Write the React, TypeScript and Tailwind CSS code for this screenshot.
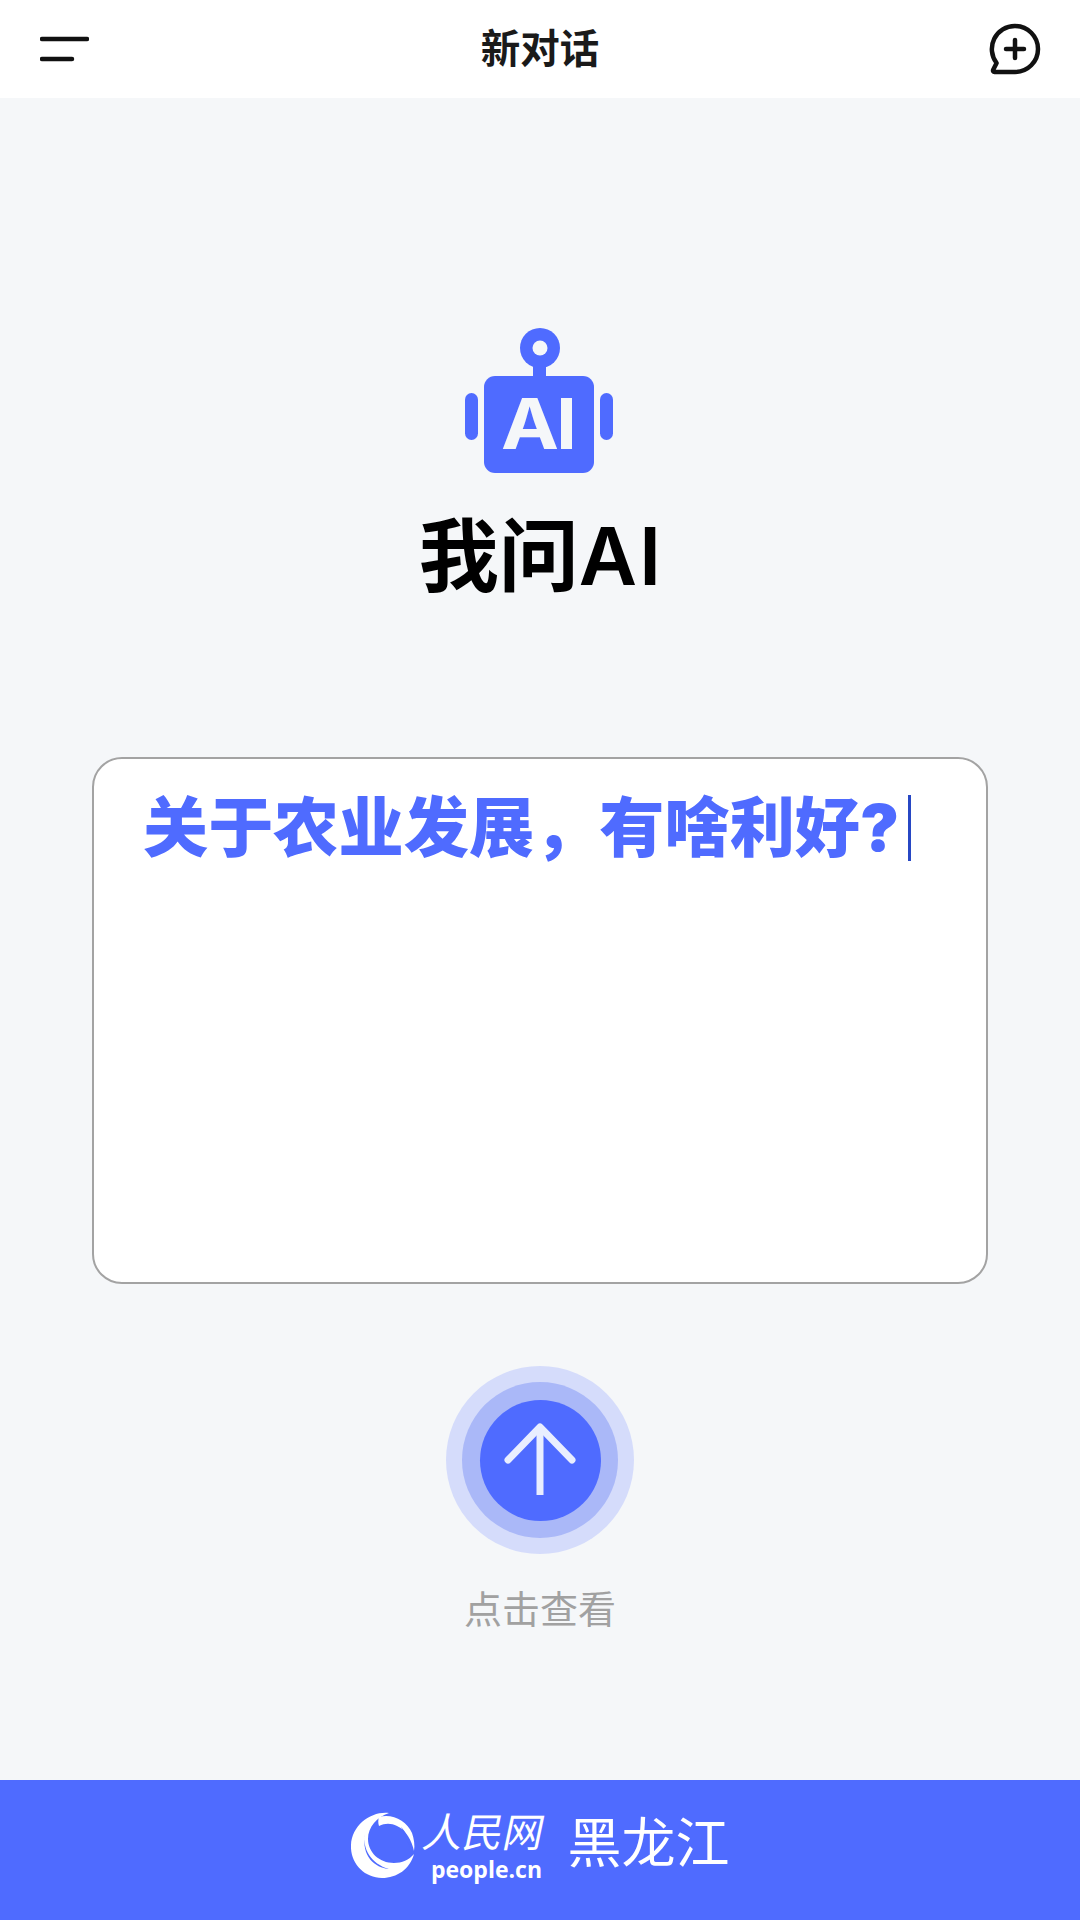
import React from 'react';

const cjk = "font-['Inter','Noto_Sans_CJK_SC',sans-serif]";

function MenuIcon() {
  return (
    <svg width="49" height="26" viewBox="0 0 49 26" fill="none">
      <path d="M2 3h45M2 23h30" stroke="#111" strokeWidth="4.5" strokeLinecap="round" />
    </svg>
  );
}

function NewChatIcon() {
  return (
    <svg width="52" height="52" viewBox="0 0 52 52" fill="none" stroke="#111" strokeWidth="4.5" strokeLinecap="round" strokeLinejoin="round">
      <path d="M26 3a23 23 0 0 1 0 46H5.5a1.5 1.5 0 0 1-1.3-2.2L7.6 40A23 23 0 0 1 26 3Z" />
      <path d="M26 17v18M17 26h18" />
    </svg>
  );
}

function RobotIcon() {
  return (
    <svg width="148" height="148" viewBox="0 0 148 148">
      <circle cx="75" cy="21" r="20" fill="#4f6bff" />
      <circle cx="75" cy="21" r="7.5" fill="#f5f7f9" />
      <rect x="68" y="36" width="13" height="16" fill="#4f6bff" />
      <rect x="19" y="49" width="110" height="97" rx="11" fill="#4f6bff" />
      <rect x="0" y="66" width="13" height="47" rx="6.5" fill="#4f6bff" />
      <rect x="135" y="66" width="13" height="47" rx="6.5" fill="#4f6bff" />
      <text x="36" y="122" textLength="58" lengthAdjust="spacingAndGlyphs" fontFamily="Inter, sans-serif" fontWeight="700" fontSize="70" fill="#f5f7f9">A</text>
      <rect x="96" y="71" width="11" height="51" fill="#f5f7f9" />
    </svg>
  );
}

function ArrowIcon() {
  return (
    <svg width="76" height="76" viewBox="0 0 76 76" fill="none" stroke="#e9eeff" strokeWidth="7" strokeLinejoin="round">
      <path d="M6 38 38 5l32 33" strokeLinecap="round" />
      <path d="M38 6v67" />
    </svg>
  );
}

function PeopleLogo() {
  return (
    <svg width="64" height="66" viewBox="0 0 64 66" fill="#fff">
      <path d="M38 1C20-1 1 13 0 33c-1 18 13 33 31 33 15 0 28-9 32-24-5 6-12 9-20 9C28 51 17 40 17 27 17 15 26 5 38 1Z" />
      <path d="M28 5c13-4 28 4 33 16 2 6 3 12 2 18-2-10-8-21-17-25-6-3-12-3-18 0-1-3-1-6 0-9Z" />
      <path d="M14 22c-3 14 6 30 24 35-14-1-28-13-24-35Z" fill="#4f6bff" />
      <path d="M50 15c5 5 8 12 9 20-3-7-6-13-9-20Z" fill="#4f6bff" />
    </svg>
  );
}

export default function App() {
  return (
    <div className={`flex h-[1920px] w-[1080px] flex-col bg-[#f5f7f9] ${cjk}`}>
      <header className="flex h-[98px] items-center justify-between bg-white pl-[40px] pr-[39px]">
        <MenuIcon />
        <h1 className="ml-[2px] mt-[1px] text-[39.5px] font-bold leading-none text-[#1a1a1a]">新对话</h1>
        <NewChatIcon />
      </header>

      <main className="flex flex-1 flex-col items-center">
        <div className="mt-[229px] mr-[3px]">
          <RobotIcon />
        </div>
        <h2 className="ml-[2px] mt-[31px] text-[80px] font-bold leading-[100px] text-black">
          我问<span className="font-semibold tracking-[2px]">AI</span>
        </h2>

        <div className="mt-[151px] h-[527px] w-[896px] rounded-[30px] border-2 border-[#a3a3a3] bg-white pl-[49px] pt-[27px]">
          <div className="flex items-center">
            <span className="text-[65.2px] font-black leading-[84px] text-[#4f6bff]">关于农业发展，有啥利好?</span>
            <span className="ml-[9px] h-[66px] w-[3px] bg-[#2747c4]" />
          </div>
        </div>

        <div className="mt-[82px] flex h-[188px] w-[188px] items-center justify-center rounded-full bg-[#d5dcfb]">
          <div className="flex h-[156px] w-[156px] items-center justify-center rounded-full bg-[#aab8f8]">
            <button className="flex h-[121px] w-[121px] items-center justify-center rounded-full bg-[#4f6bff]">
              <ArrowIcon />
            </button>
          </div>
        </div>
        <p className="mt-[30px] text-[38px] font-normal leading-[50px] text-[#a1a1a1]">点击查看</p>
      </main>

      <footer className="flex h-[140px] items-start justify-center bg-[#4f6bff] pt-[28px] text-white">
        <div className="mt-[4px]">
          <PeopleLogo />
        </div>
        <div className="ml-[7px] flex w-[124px] flex-col items-center">
          <span className="-skew-x-12 text-[40px] font-normal leading-[50px]">人民网</span>
          <span className="ml-[6px] -mt-[2px] font-['Open_Sans',sans-serif] text-[23px] font-bold leading-[26px]">people.cn</span>
        </div>
        <span className="ml-[22px] mt-[3px] text-[54px] font-normal leading-[66px]">黑龙江</span>
      </footer>
    </div>
  );
}
